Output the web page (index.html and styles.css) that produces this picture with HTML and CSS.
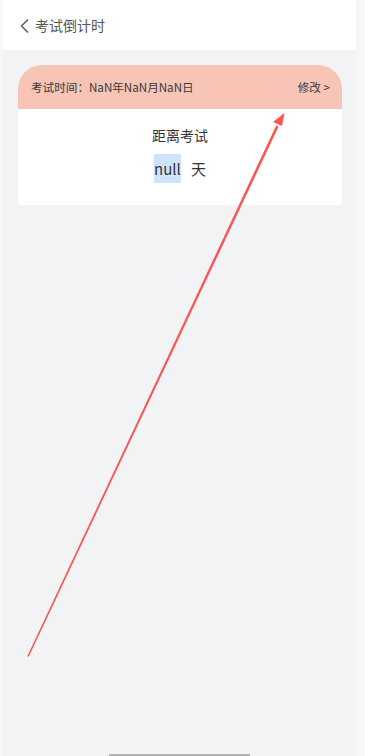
FILE: index.html
```html
<!DOCTYPE html>
<html lang="zh-CN">
<head>
    <meta charset="UTF-8">
    <meta name="viewport" content="width=device-width, initial-scale=1.0">
    <title>考试倒计时</title>
    <link rel="stylesheet" href="styles.css">
</head>
<body>
    <div class="page">
        <div class="nav-bar">
            <svg class="back-icon" width="12" height="16" viewBox="0 0 12 16">
                <path d="M9 1.5 L2.5 8 L9 14.5" fill="none" stroke="#555" stroke-width="1.4"/>
            </svg>
            <span class="nav-title">考试倒计时</span>
        </div>

        <div class="exam-card">
            <div class="card-head">
                <span class="exam-date">考试时间：NaN年NaN月NaN日</span>
                <span class="edit-link">修改 &gt;</span>
            </div>
            <div class="card-body">
                <p class="label">距离考试</p>
                <p class="days"><span class="days-num">null</span><span class="days-unit">天</span></p>
            </div>
        </div>

        <div class="home-bar"></div>
    </div>

    <!-- annotation arrow drawn over the screenshot -->
    <svg class="annotation" width="365" height="756" viewBox="0 0 365 756">
        <polygon points="27.3,656.3 28.7,656.7 278.6,126.6 276.2,125.4" fill="#ff5252"/>
        <polygon points="284.5,113 273,122 282,126" fill="#ff5252"/>
    </svg>
</body>
</html>
```

FILE: styles.css
```css
body {
    margin: 0;
    padding: 0;
    background-color: #f7f7f8;
    font-family: "Noto Sans CJK SC", "Noto Sans", sans-serif;
    color: #333;
}
.page {
    position: relative;
    margin: 0 9px 0 3px;
    height: 756px;
    background-color: #f2f3f5;
}
.nav-bar {
    display: flex;
    align-items: center;
    height: 50px;
    padding-left: 16px;
    background-color: #fff;
}
.back-icon {
    display: block;
    margin-right: 4px;
    margin-top: 1px;
}
.nav-title {
    font-size: 14px;
    color: #555;
}
.exam-card {
    margin: 15px 14px 0 15px;
    background-color: #fff;
    border-radius: 24px 24px 4px 4px;
    overflow: hidden;
}
.card-head {
    display: flex;
    justify-content: space-between;
    align-items: center;
    height: 44px;
    padding: 0 12px 0 13px;
    background-color: #f7c4b6;
    font-size: 11.6px;
    color: #3a3a3a;
}
.card-body {
    height: 96px;
    padding-top: 16px;
    box-sizing: border-box;
    text-align: center;
}
.label {
    margin: 0;
    font-size: 14px;
    line-height: 20px;
    color: #333;
}
.days {
    margin: 9px 0 0;
    font-size: 15px;
    line-height: 29px;
    color: #333;
}
.days-num {
    display: inline-block;
    background-color: #cfe4fc;
}
.days-unit {
    margin-left: 10px;
}
.home-bar {
    position: absolute;
    left: 106px;
    bottom: 0;
    width: 141px;
    height: 2px;
    background-color: #b3b3b3;
}
.annotation {
    position: absolute;
    left: 0;
    top: 0;
    pointer-events: none;
}
```
